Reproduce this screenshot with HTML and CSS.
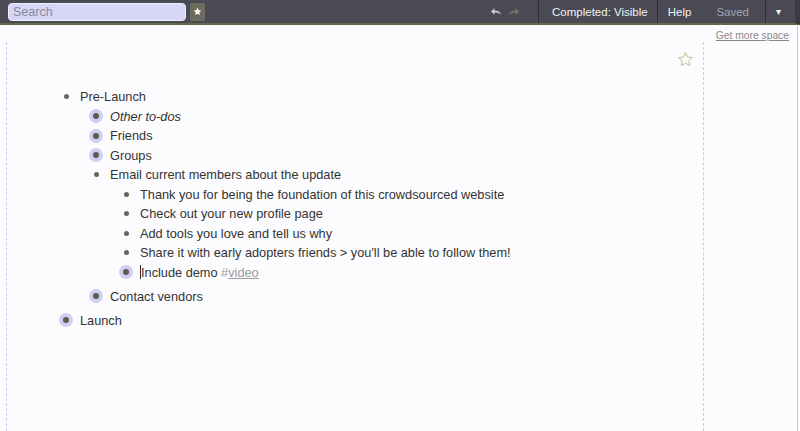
FILE: index.html
```html
<!DOCTYPE html>
<html lang="en">
	<head>
		<meta charset="UTF-8">
		<title>Outline</title>
		<link rel="stylesheet" href="styles.css">
	</head>
	<body>
	<div class="topbar">
		<div class="search">
			<input class="search-input" type="text" placeholder="Search">
			<span class="star-btn">
				<svg width="9" height="9" viewBox="0 0 10 10"><path d="M5 .6l1.3 2.9 3.1.3-2.4 2.1.7 3.1L5 7.4 2.3 9l.7-3.1L.6 3.8l3.1-.3z" fill="#fff"/></svg>
			</span>
		</div>
		<div class="history">
			<svg width="12" height="9" viewBox="0 0 12 9"><path d="M1 4.5L4.5 1.2V3.4C8 3.4 10.5 4.8 11 8 9.5 6 7.5 5.5 4.5 5.5V7.8z" fill="#c9c9d6"/></svg>
			<svg width="12" height="9" viewBox="0 0 12 9"><path d="M11 4.5L7.5 1.2V3.4C4 3.4 1.5 4.8 1 8 2.5 6 4.5 5.5 7.5 5.5V7.8z" fill="#77776a"/></svg>
		</div>
		<div class="menu sep completed">Completed: Visible</div>
		<div class="menu sep help">Help</div>
		<div class="menu saved">Saved</div>
		<div class="menu sep caret">&#9662;</div>
	</div>
	<div class="main">
		<div class="page">
			<div class="page-head">
				<svg width="17" height="17" viewBox="0 0 20 20"><path d="M10 1.8l2.4 5.3 5.7.6-4.3 3.9 1.2 5.7L10 14.4l-5 2.9 1.2-5.7-4.3-3.9 5.7-.6z" fill="none" stroke="#bcb78f" stroke-width="1.1" stroke-linejoin="round"/></svg>
			</div>
			<div class="outline">
				<div class="item">
					<div class="row"><span class="bullet"><i></i></span><span class="name">Pre-Launch</span></div>
					<div class="children">
						<div class="item">
							<div class="row"><span class="bullet closed"><i></i></span><span class="name note">Other to-dos</span></div>
						</div>
						<div class="item">
							<div class="row"><span class="bullet closed"><i></i></span><span class="name">Friends</span></div>
						</div>
						<div class="item">
							<div class="row"><span class="bullet closed"><i></i></span><span class="name">Groups</span></div>
						</div>
						<div class="item">
							<div class="row"><span class="bullet"><i></i></span><span class="name">Email current members about the update</span></div>
							<div class="children">
								<div class="item"><div class="row"><span class="bullet"><i></i></span><span class="name">Thank you for being the foundation of this crowdsourced website</span></div></div>
								<div class="item"><div class="row"><span class="bullet"><i></i></span><span class="name">Check out your new profile page</span></div></div>
								<div class="item"><div class="row"><span class="bullet"><i></i></span><span class="name">Add tools you love and tell us why</span></div></div>
								<div class="item"><div class="row"><span class="bullet"><i></i></span><span class="name">Share it with early adopters friends &gt; you'll be able to follow them!</span></div></div>
								<div class="item"><div class="row"><span class="bullet closed"><i></i></span><span class="name"><span class="cursor"></span>Include demo <span class="tag">#<u>video</u></span></span></div></div>
							</div>
						</div>
						<div class="item">
							<div class="row"><span class="bullet closed"><i></i></span><span class="name">Contact vendors</span></div>
						</div>
					</div>
				</div>
				<div class="item">
					<div class="row"><span class="bullet closed"><i></i></span><span class="name">Launch</span></div>
				</div>
			</div>
		</div>
		<div class="side">
			<a class="more-space" href="#">Get more space</a>
		</div>
	</div>
	</body>
</html>
```

FILE: styles.css
```css
body {
	margin: 0;
	font-family: "Liberation Sans", Arial, sans-serif;
	background-color: #fcfcfe;
	color: #333;
	height: 431px;
	overflow: hidden;
}

.topbar {
	display: flex;
	align-items: stretch;
	height: 23px;
	background-color: #4a4a54;
	border-bottom: 2px solid #66664a;
	border-right: 5px solid #3a3a48;
	color: #f2f2f2;
	font-size: 11.5px;
}

.search {
	display: flex;
	align-items: center;
	padding-left: 8px;
}

.search-input {
	width: 178px;
	height: 18px;
	box-sizing: border-box;
	padding: 0 4px;
	border: 1px solid #eeeefc;
	border-radius: 4px;
	background-color: #d6d6f7;
	font-family: inherit;
	font-size: 12.5px;
	color: #555;
}

.search-input::placeholder {
	color: #8a8a9a;
}

.star-btn {
	display: flex;
	align-items: center;
	justify-content: center;
	width: 15px;
	height: 18px;
	margin-left: 4px;
	border-radius: 2px;
	background-color: #6c6b5e;
}

.history {
	display: flex;
	align-items: center;
	gap: 6px;
	margin-left: auto;
	padding-right: 18px;
}

.menu {
	display: flex;
	align-items: center;
	padding: 0 10px;
}

.sep {
	border-left: 1px solid #2e2e38;
}

.completed {
	padding: 0 9px 0 13px;
}

.help {
	padding: 0 12px 0 10px;
}

.saved {
	color: #a4a4b0;
	padding: 0 16px 0 13px;
}

.caret {
	padding: 0 10px;
	font-size: 10px;
	width: 9px;
}

.main {
	display: flex;
	height: 406px;
	border-right: 1px solid #cfcfa8;
	margin-right: 2px;
}

.page {
	width: 696px;
	margin: 17px 0 0 6px;
	border-left: 1px dashed #cacaf0;
	border-right: 1px dashed #cacaf0;
}

.page-head {
	display: flex;
	justify-content: flex-end;
	padding: 9px 9px 0 0;
	height: 19px;
}

.outline {
	padding: 17px 0 0 50px;
	font-size: 12.75px;
}

.row {
	display: flex;
	align-items: center;
	height: 19.5px;
}

.children {
	margin-left: 30px;
	padding-bottom: 4.5px;
}

.bullet {
	display: flex;
	align-items: center;
	justify-content: center;
	width: 18px;
	height: 18px;
	margin-right: 5px;
}

.bullet i {
	width: 5px;
	height: 5px;
	border-radius: 50%;
	background-color: #66665c;
}

.bullet.closed i {
	width: 6px;
	height: 6px;
	background-color: #5c5c50;
	box-shadow: 0 0 0 4px #cfcff4;
}

.note {
	font-style: italic;
}

.cursor {
	display: inline-block;
	width: 0;
	height: 14px;
	border-left: 1px solid #333;
	vertical-align: -2px;
}

.tag {
	color: #9a9a9a;
}

.side {
	flex: 1;
	display: flex;
	justify-content: flex-end;
	align-items: flex-start;
	padding: 5px 8px 0 0;
}

.more-space {
	color: #8a8a8a;
	font-size: 10.3px;
	text-decoration: underline;
}
```
